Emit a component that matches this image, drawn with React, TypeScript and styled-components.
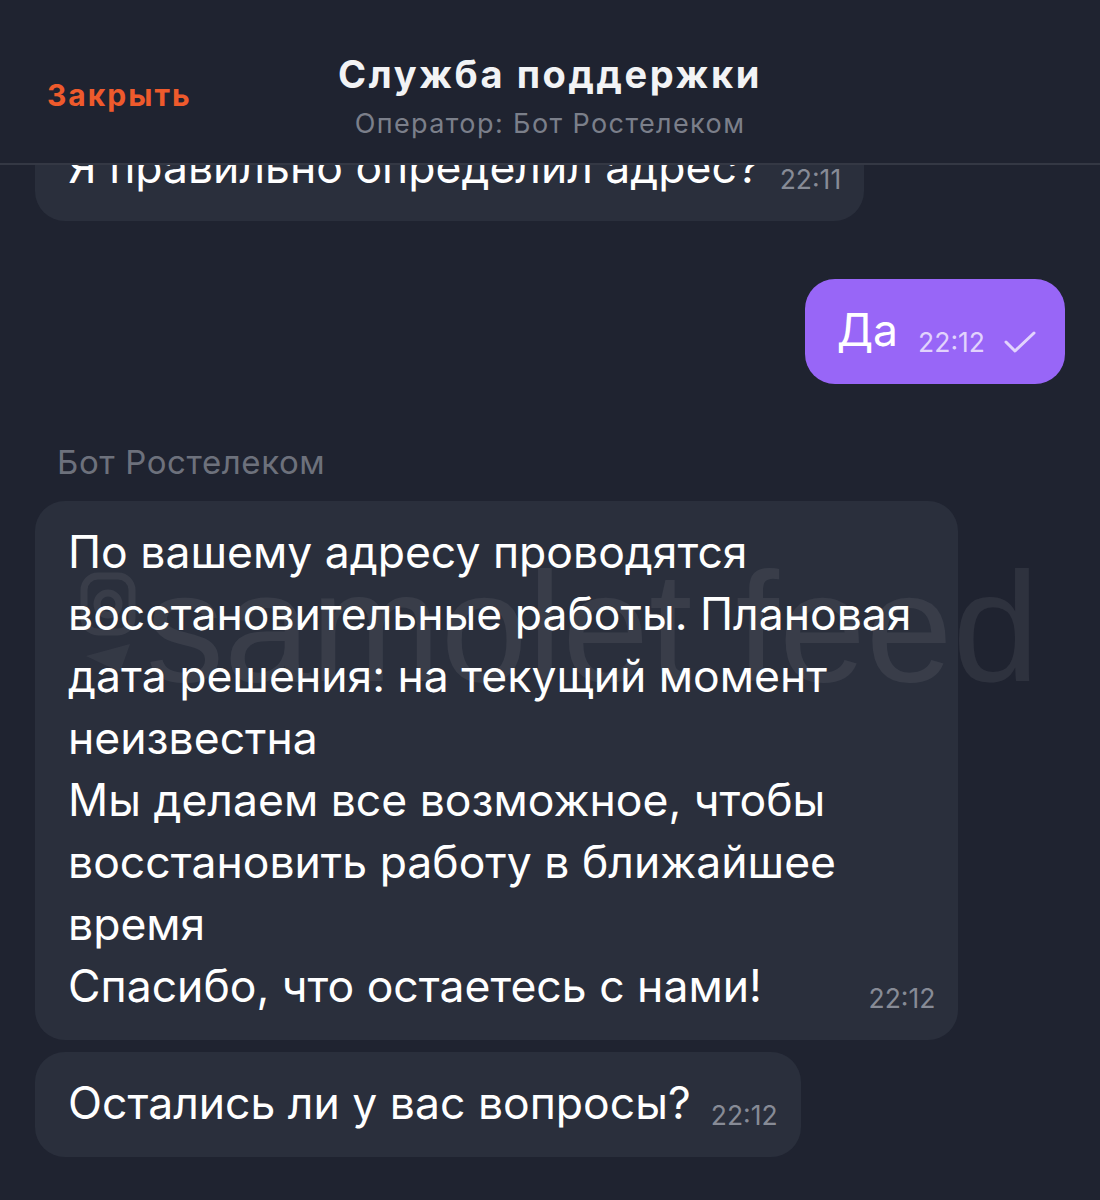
import React from "react";
import styled, { createGlobalStyle } from "styled-components";

const GlobalStyle = createGlobalStyle`
  html, body {
    margin: 0;
    padding: 0;
    height: 100%;
    background: #1f2330;
  }
  #root {
    height: 100%;
  }
`;

const FONT = `"Inter", "Noto Sans", "Liberation Sans", sans-serif`;

// layout
const Screen = styled.div`
  width: 1100px;
  height: 1200px;
  display: flex;
  flex-direction: column;
  background: #1f2330;
  font-family: ${FONT};
  overflow: hidden;
`;

const Header = styled.header`
  height: 163px;
  flex: 0 0 auto;
  display: grid;
  grid-template-columns: 1fr auto 1fr;
  align-items: center;
  border-bottom: 2px solid #343844;
  position: relative;
  z-index: 2;
  background: #1f2330;
`;

const CloseLink = styled.a`
  justify-self: start;
  margin-left: 47px;
  margin-top: 26px;
  color: #ee5a2c;
  font-size: 30px;
  font-weight: 700;
  letter-spacing: 2px;
  cursor: pointer;
`;

const TitleBlock = styled.div`
  display: flex;
  flex-direction: column;
  align-items: center;
  gap: 12px;
  margin-top: 28px;
`;

const Title = styled.div`
  color: #f2f3f5;
  font-size: 38px;
  font-weight: 700;
  line-height: 44px;
  letter-spacing: 2.6px;
`;

const Subtitle = styled.div`
  color: #7b7f8a;
  font-size: 27px;
  line-height: 32px;
  letter-spacing: 1.4px;
`;

const Chat = styled.main`
  flex: 1 1 auto;
  position: relative;
  overflow: hidden;
  display: flex;
  flex-direction: column;
  padding: 0 35px;
`;

const Row = styled.div<{ $out?: boolean; $gap?: number }>`
  display: flex;
  justify-content: ${(p) => (p.$out ? "flex-end" : "flex-start")};
  margin-top: ${(p) => p.$gap ?? 0}px;
`;

const Bubble = styled.div<{ $out?: boolean }>`
  display: flex;
  flex-direction: column;
  padding: ${(p) => (p.$out ? "20px 28px 23px 32px" : "20px 23px 23px 33px")};
  border-radius: 30px;
  background: ${(p) => (p.$out ? "#9866f7" : "#2a2f3c")};
  color: #ffffff;
  font-size: 44.5px;
  line-height: 62px;
`;

const Lines = styled.div`
  white-space: pre;
  padding-right: 24px;
`;

const LastRow = styled.div`
  display: flex;
  align-items: baseline;
  justify-content: space-between;
  gap: 20px;
  white-space: pre;
`;

const Meta = styled.span<{ $out?: boolean }>`
  display: inline-flex;
  align-items: center;
  gap: 18px;
  font-size: 26.5px;
  line-height: 1;
  position: relative;
  top: 6px;
  color: ${(p) => (p.$out ? "rgba(255,255,255,0.72)" : "#878b96")};
`;

const Sender = styled.div`
  margin: 58px 0 0 22px;
  color: #6d717c;
  font-size: 33px;
  line-height: 40px;
  letter-spacing: 0.6px;
`;

const Watermark = styled.div`
  position: absolute;
  left: 80px;
  top: 384px;
  display: flex;
  align-items: center;
  gap: 10px;
  color: rgba(255, 255, 255, 0.07);
  font-family: "Liberation Sans", sans-serif;
  font-size: 156px;
  line-height: 1;
  letter-spacing: 0px;
  pointer-events: none;
  white-space: nowrap;
`;

const Check = () => (
  <svg width="34" height="24" viewBox="0 0 34 24" fill="none">
    <polyline
      points="3,12 12,21 31,3"
      stroke="rgba(255,255,255,0.72)"
      strokeWidth="3"
      strokeLinecap="round"
      strokeLinejoin="round"
    />
  </svg>
);

const CameraMark = () => (
  <svg width="56" height="110" viewBox="0 0 56 110" fill="none">
    <rect x="4" y="4" width="48" height="56" rx="14" stroke="rgba(255,255,255,0.07)" strokeWidth="7" />
    <circle cx="28" cy="32" r="11" stroke="rgba(255,255,255,0.07)" strokeWidth="7" />
    <path d="M6 84 L50 72 L40 100 Z" fill="rgba(255,255,255,0.05)" />
  </svg>
);

interface MessageProps {
  lines: string[];
  time: string;
  out?: boolean;
}

const Message = ({ lines, time, out }: MessageProps) => {
  const head = lines.slice(0, -1);
  const last = lines[lines.length - 1];
  return (
    <Bubble $out={out}>
      {head.length > 0 && <Lines>{head.join("\n")}</Lines>}
      <LastRow>
        <span>{last}</span>
        <Meta $out={out}>
          {time}
          {out && <Check />}
        </Meta>
      </LastRow>
    </Bubble>
  );
};

export default function App() {
  return (
    <>
      <GlobalStyle />
      <Screen>
        <Header>
          <CloseLink>Закрыть</CloseLink>
          <TitleBlock>
            <Title>Служба поддержки</Title>
            <Subtitle>Оператор: Бот Ростелеком</Subtitle>
          </TitleBlock>
          <span />
        </Header>
        <Chat>
          <Row $gap={-49}>
            <Message lines={["Я правильно определил адрес?"]} time="22:11" />
          </Row>
          <Row $out $gap={58}>
            <Message lines={["Да"]} time="22:12" out />
          </Row>
          <Sender>Бот Ростелеком</Sender>
          <Row $gap={19}>
            <Message
              lines={[
                "По вашему адресу проводятся",
                "восстановительные работы. Плановая",
                "дата решения: на текущий момент",
                "неизвестна",
                "Мы делаем все возможное, чтобы",
                "восстановить работу в ближайшее",
                "время",
                "Спасибо, что остаетесь с нами!",
              ]}
              time="22:12"
            />
          </Row>
          <Row $gap={12}>
            <Message lines={["Остались ли у вас вопросы?"]} time="22:12" />
          </Row>
          <Watermark>
            <CameraMark />
            <span>samolet feed</span>
          </Watermark>
        </Chat>
      </Screen>
    </>
  );
}
